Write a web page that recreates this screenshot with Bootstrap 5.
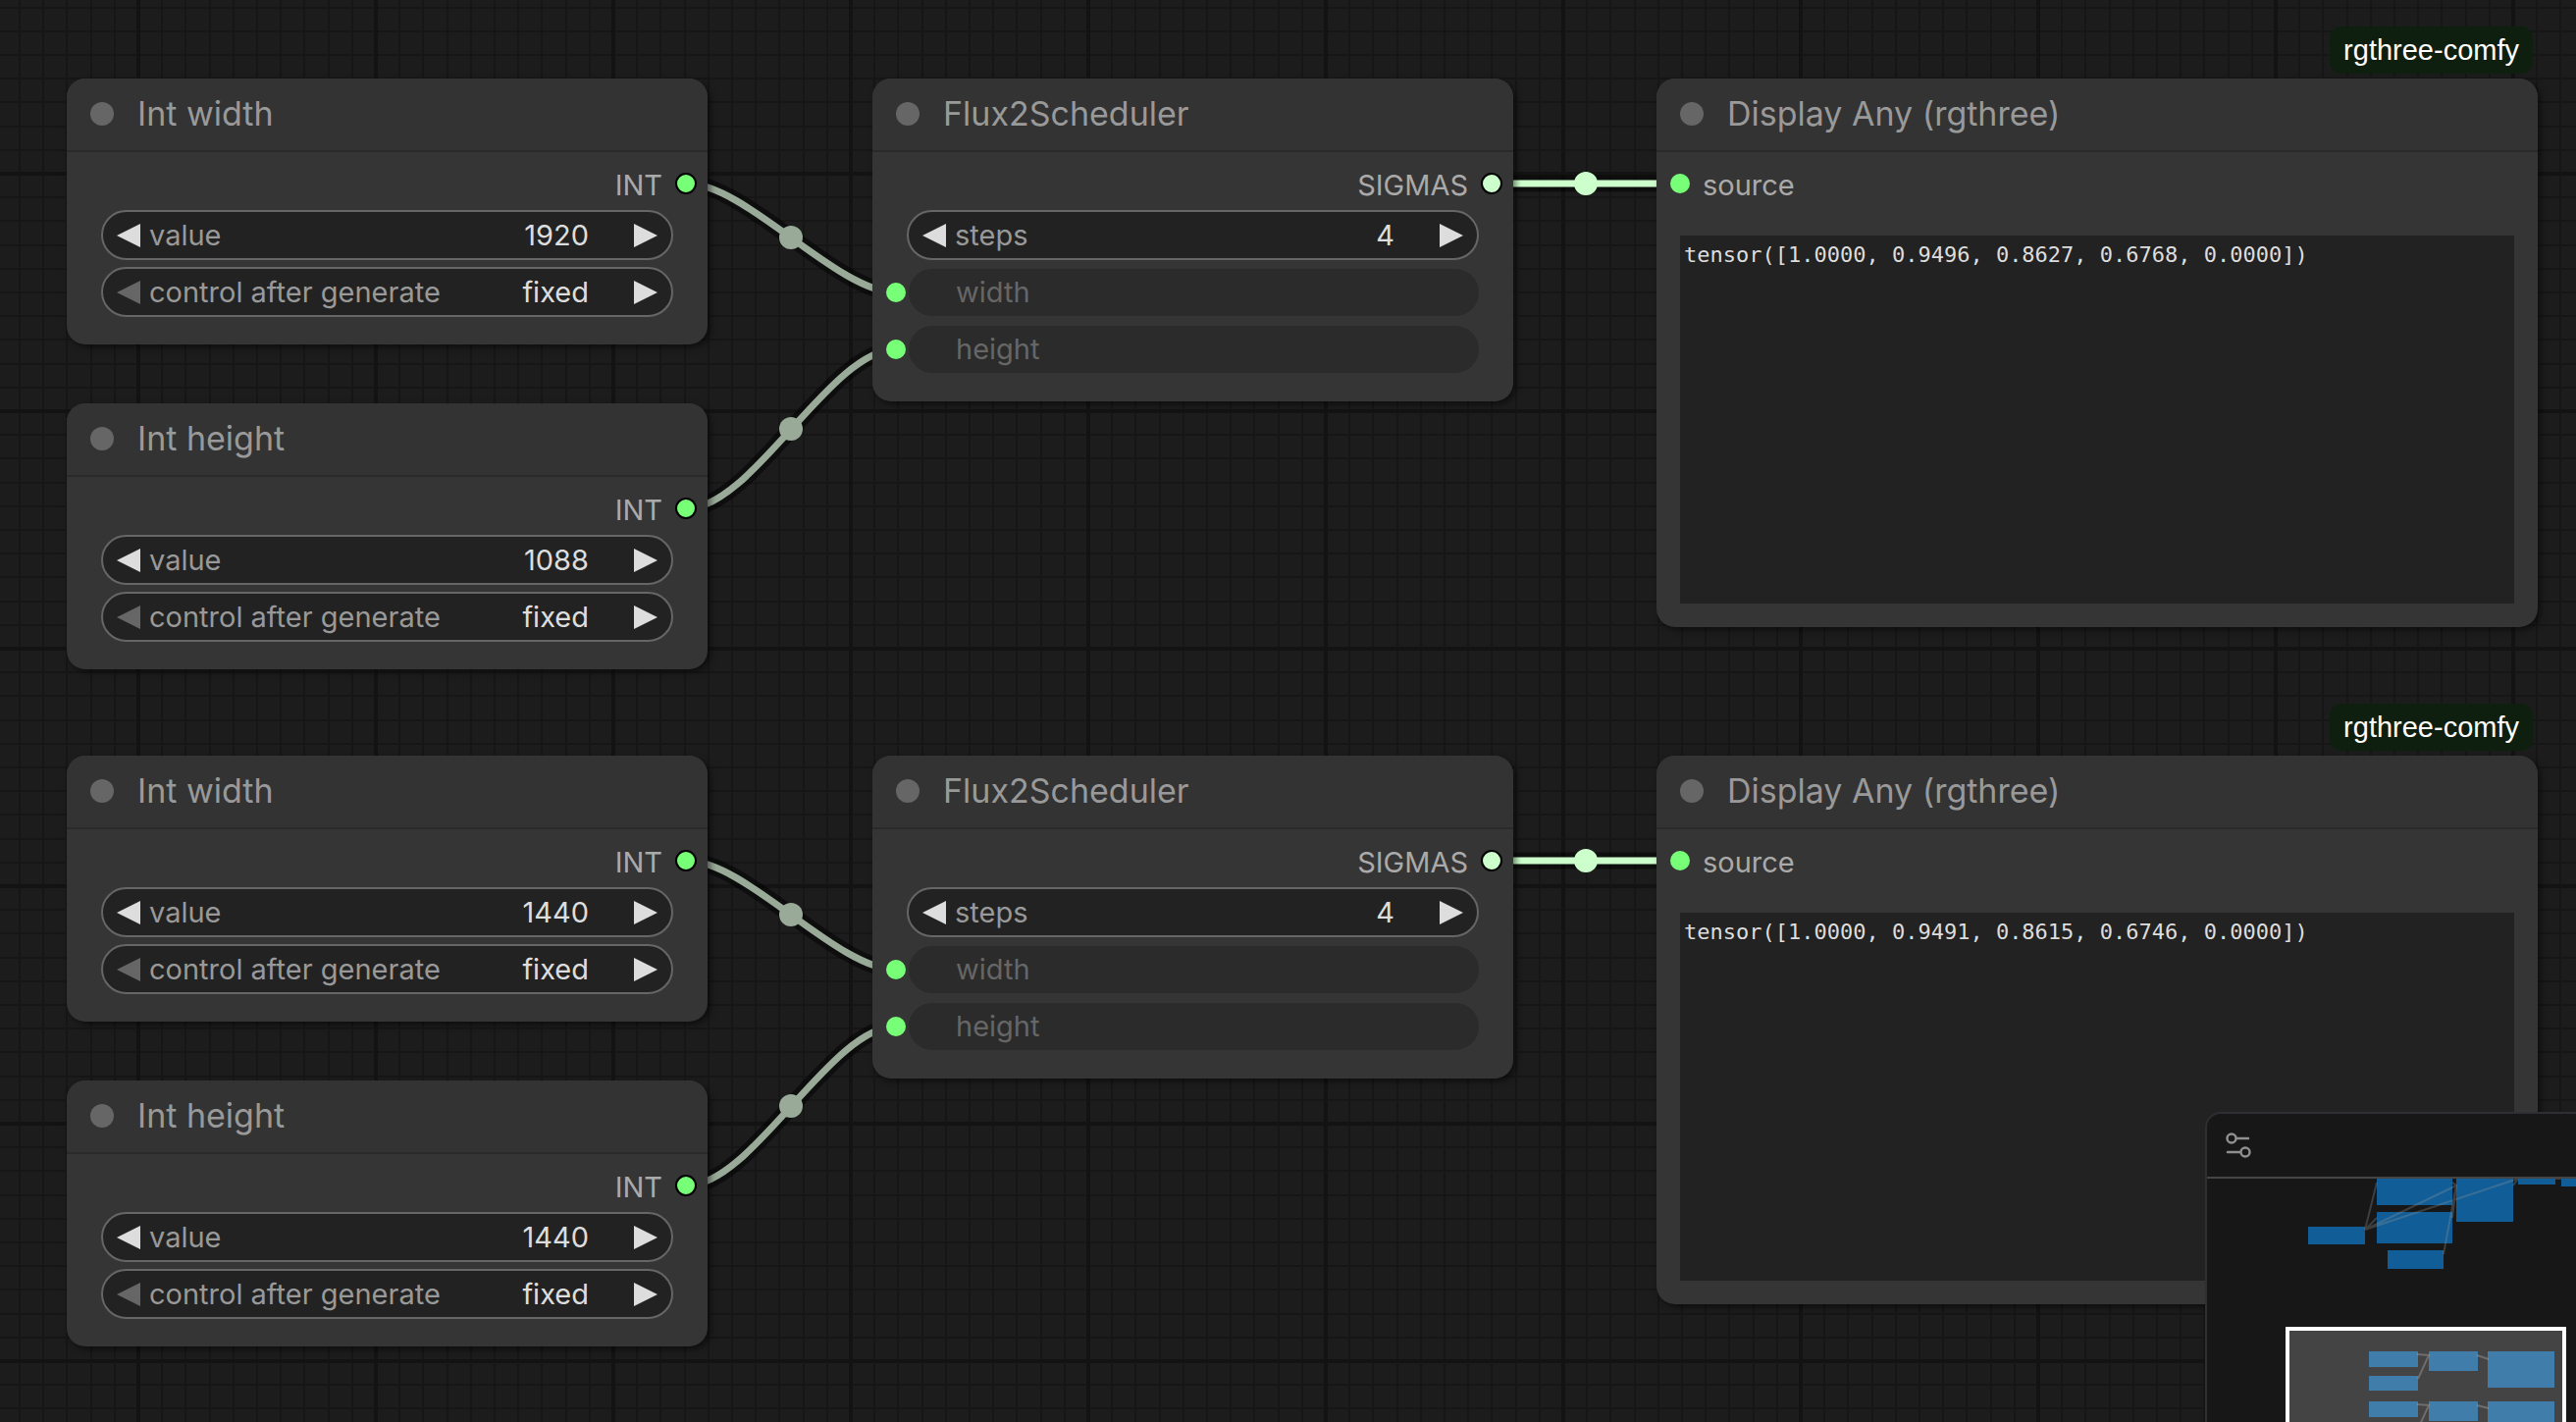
<!DOCTYPE html>
<html lang="en" data-bs-theme="dark">
<head>
<meta charset="utf-8">
<meta name="viewport" content="width=device-width, initial-scale=1">
<title>Node graph</title>
<link rel="stylesheet" href="https://cdn.jsdelivr.net/npm/bootstrap@5.3.0/dist/css/bootstrap.min.css">
<style>
  body { font-family: Inter, "Liberation Sans", sans-serif; background: #1c1c1c; }
  .graph { background: #1c1c1c; }
  .wires { inset: 0; }
  .wire-edge { fill: none; stroke: rgba(0,0,0,.5); stroke-width: 17; }
  .wire { fill: none; stroke-width: 7; stroke: #9a9; }
  .wire-knot { fill: #9a9; }
  .wire.sigma { stroke: #cfc; }
  .wire-knot.sigma { fill: #cfc; }

  /* nodes sit freely on the canvas */
  .node { width: 653px; background: #353535; border-radius: 19px; box-shadow: 3px 3px 6px rgba(0,0,0,.5); font-size: 29px; line-height: 36px; color: #aaa; }
  .node.wide { width: 898px; height: 559px; }
  .col-a { left: 68px; } .col-b { left: 889px; } .col-c { left: 1688px; }
  .row-1 { top: 80px; } .row-2 { top: 411px; } .row-3 { top: 770px; } .row-4 { top: 1101px; }
  .node-title { height: 75px; padding: 0 24px 2px; gap: 24px; background: #333; border-bottom: 2px solid #2a2a2a; border-radius: 19px 19px 0 0; }
  .node-title h2 { font-size: 34px; line-height: 42px; font-weight: 400; color: #999; }
  .node-title .state { width: 24px; height: 24px; background: #666; }
  .slot-row { height: 59px; padding: 16px 11px 7px 14px; gap: 13px; }
  .slot-row .port { margin-bottom: 4px; }
  .port { width: 20px; height: 20px; background: #7f7; flex: none; }
  .port.out { border: 2px solid #000; width: 22px; height: 22px; }
  .port.sigma { background: #cfc; }
  .widgets { padding: 0 35px 28px; gap: 7px; }
  .widget { height: 51px; border: 2px solid #666; background: #222; padding: 0 14px; }
  .widget input { width: 130px; margin-right: 46px; font-size: 29px; line-height: 36px; color: #ddd; text-align: right; }
  .widget label { margin-left: 9px; color: #999; }
  .arrow { width: 24px; height: 24px; color: #ddd; line-height: 0; flex: none; }
  .arrow:disabled { color: #666; opacity: 1; }
  .linked { height: 51px; gap: 3px; margin-left: -21px; }
  .linked .pill { height: 48px; background: #2b2b2b; color: #666; padding: 6px 48px; }
  .pack { right: 5px; top: -53px; height: 48px; background: #0f1f0f; border-radius: 12px; color: #fff; font: 29px/48px "Liberation Sans", sans-serif; padding: 0 14px; }
  .out-text { margin: 26px 24px 24px; padding: 6px 4px; background: #222; color: #ddd; border: 0; resize: none; font: 22px/28px "DejaVu Sans Mono", monospace; }

  .minimap { left: 2247px; top: 1133px; right: -20px; bottom: -20px; background: #171717; border: 2px solid #2e2e33; border-radius: 16px 0 0 0; overflow: hidden; }
  .minimap-head { height: 66px; border-bottom: 2px solid #444; padding: 0 18px; }
</style>
</head>
<body>
<main class="graph position-relative overflow-hidden vh-100 w-100">
  <svg class="wires position-absolute w-100 h-100" aria-hidden="true">
    <defs>
      <pattern id="grid" x="141" y="177" width="242" height="242" patternUnits="userSpaceOnUse">
        <path stroke="#161616" stroke-width="2" d="M24 0V242M48 0V242M73 0V242M97 0V242M121 0V242M145 0V242M169 0V242M194 0V242M218 0V242M0 24H242M0 48H242M0 73H242M0 97H242M0 121H242M0 145H242M0 169H242M0 194H242M0 218H242"/>
        <path stroke="#131313" stroke-width="4" d="M0 0V242M242 0V242M0 0H242M0 242H242"/>
      </pattern>
      <g id="links">
        <path class="wire-edge" d="M700 187C760 187 853 298 913 298"/><path class="wire" d="M700 187C760 187 853 298 913 298"/><circle class="wire-knot" cx="806" cy="242" r="12"/>
        <path class="wire-edge" d="M700 518C767 518 846 356 913 356"/><path class="wire" d="M700 518C767 518 846 356 913 356"/><circle class="wire-knot" cx="806" cy="437" r="12"/>
        <path class="wire-edge" d="M1520 187H1712"/><path class="wire sigma" d="M1520 187H1712"/><circle class="wire-knot sigma" cx="1616" cy="187" r="12"/>
      </g>
    </defs>
    <rect width="100%" height="100%" fill="url(#grid)"/>
    <use href="#links"/><use href="#links" y="690"/>
  </svg>
  <div id="nodes"></div>

  <aside class="minimap position-absolute" aria-label="Minimap">
    <div class="minimap-head d-flex align-items-center">
      <button type="button" class="btn p-0 border-0 d-flex" aria-label="Minimap settings">
        <svg width="28" height="28" viewBox="0 0 28 28" fill="none" stroke="#8f8f8f" stroke-width="2.5" stroke-linecap="round"><circle cx="7" cy="7" r="4.5"/><path d="M12 7H24M3 21H16"/><circle cx="21" cy="21" r="4.5"/></svg>
      </button>
    </div>
    <svg class="d-block" width="400" height="260" viewBox="2249 1201 400 260">
      <g fill="#115d97"><path d="M2422 1199h77v29h-77zM2422 1235h77v32h-77zM2503 1199h58v46h-58zM2352 1250h58v18h-58zM2433 1274h57v19h-57zM2566 1199h38v8h-38zM2610 1199h30v10h-30z"/></g>
      <g fill="none" stroke="#999" stroke-opacity=".3" stroke-width="2"><path d="M2410 1253L2422 1205M2410 1253L2422 1241M2410 1253L2503 1208M2410 1253L2566 1201M2499 1205L2503 1208L2499 1241M2503 1208L2490 1278M2561 1208L2566 1201M2604 1201H2610"/></g>
      <rect x="2331" y="1354" width="282" height="160" fill="#444" stroke="#fff" stroke-width="4"/>
      <g fill="#417dab"><path d="M2414 1377h50v16h-50zM2414 1402h50v15h-50zM2475 1377h50v20h-50zM2535 1377h68v37h-68zM2414 1428h50v16h-50zM2475 1428h50v20h-50zM2535 1428h68v37h-68z"/></g>
      <path fill="none" stroke="#bbb" stroke-opacity=".35" stroke-width="2" d="M2463 1380L2475 1381L2464 1405M2524 1381L2536 1385M2463 1431L2475 1432L2464 1456M2524 1432L2536 1435"/>
    </svg>
  </aside>
</main>

<script>
  const left = '<svg width="24" height="24" viewBox="0 0 24 24" fill="currentColor"><path d="M24 0V24L0 12Z"/></svg>';
  const right = '<svg width="24" height="24" viewBox="0 0 24 24" fill="currentColor"><path d="M0 0V24L24 12Z"/></svg>';
  let count = 0;
  const title = t => `<header class="node-title d-flex align-items-center"><span class="state rounded-circle"></span><h2 class="m-0">${t}</h2></header>`;
  const output = (t, c) => `<div class="slot-row d-flex align-items-center justify-content-end"><span>${t}</span><span class="port out rounded-circle ${c}"></span></div>`;
  const widget = (label, value, first) => {
    const id = 'w' + (++count);
    return `<div class="widget rounded-pill d-flex align-items-center">
      <button type="button" class="arrow btn p-0 border-0" aria-label="Previous ${label}" ${first ? 'disabled' : ''}>${left}</button>
      <label for="${id}" class="me-auto text-nowrap">${label}</label>
      <input id="${id}" class="border-0 bg-transparent p-0" value="${value}">
      <button type="button" class="arrow btn p-0 border-0" aria-label="Next ${label}">${right}</button></div>`;
  };
  const linked = t => `<div class="linked d-flex align-items-center"><span class="port rounded-circle"></span><div class="pill rounded-pill flex-grow-1">${t}</div></div>`;
  const intNode = (row, name, value) => `<section class="node position-absolute col-a ${row}">${title(name)}${output('INT', '')}
    <div class="widgets d-flex flex-column">${widget('value', value)}${widget('control after generate', 'fixed', true)}</div></section>`;
  const scheduler = row => `<section class="node position-absolute col-b ${row}">${title('Flux2Scheduler')}${output('SIGMAS', 'sigma')}
    <div class="widgets d-flex flex-column">${widget('steps', 4)}${linked('width')}${linked('height')}</div></section>`;
  const display = (row, text) => `<section class="node wide position-absolute col-c d-flex flex-column ${row}">
    <span class="pack position-absolute">rgthree-comfy</span>${title('Display Any (rgthree)')}
    <div class="slot-row d-flex align-items-center"><span class="port rounded-circle"></span><span>source</span></div>
    <textarea class="out-text flex-grow-1" aria-label="Displayed value" readonly spellcheck="false">${text}</textarea></section>`;
  document.getElementById('nodes').innerHTML =
    intNode('row-1', 'Int width', 1920) + intNode('row-2', 'Int height', 1088) + scheduler('row-1') +
    display('row-1', 'tensor([1.0000, 0.9496, 0.8627, 0.6768, 0.0000])') +
    intNode('row-3', 'Int width', 1440) + intNode('row-4', 'Int height', 1440) + scheduler('row-3') +
    display('row-3', 'tensor([1.0000, 0.9491, 0.8615, 0.6746, 0.0000])');
</script>
<script src="https://cdn.jsdelivr.net/npm/bootstrap@5.3.0/dist/js/bootstrap.bundle.min.js"></script>
</body>
</html>
